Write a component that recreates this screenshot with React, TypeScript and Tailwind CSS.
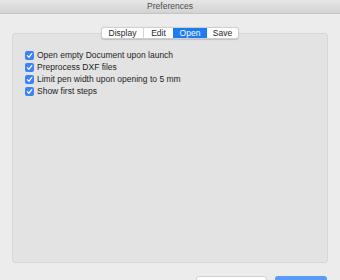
import React from "react";

const Check = () => (
  <span className="w-[9px] h-[9px] rounded-[2px] bg-[#3b82f6] flex items-center justify-center shrink-0">
    <svg width="7" height="7" viewBox="0 0 8 8">
      <path d="M1.5 4.2 L3.3 6 L6.6 1.8" stroke="white" strokeWidth="1.4" fill="none" strokeLinecap="round" strokeLinejoin="round" />
    </svg>
  </span>
);

export default function App() {
  const items = [
    "Open empty Document upon launch",
    "Preprocess DXF files",
    "Limit pen width upon opening to 5 mm",
    "Show first steps",
  ];
  const tabs = ["Display", "Edit", "Open", "Save"];
  return (
    <div
      className="w-[340px] h-[280px] bg-[#ececec] overflow-hidden flex flex-col"
      style={{ fontFamily: '"Liberation Sans", Arial, sans-serif' }}
    >
      <div className="h-[14px] shrink-0 bg-gradient-to-b from-[#e6e6e6] to-[#d3d3d3] border-b border-[#c4c4c4] flex items-center justify-center text-[8.5px] text-[#4d4d4d]">
        Preferences
      </div>
      <div className="relative flex-1 px-[12px] pt-[19px]">
        <div className="h-[230px] bg-[#e3e3e3] border border-[#d6d6d6] rounded-[3px] pt-[17px] pl-[12px] flex flex-col gap-[3px]">
          {items.map((t) => (
            <div key={t} className="flex items-center gap-[3px] h-[9px] text-[8.5px] text-[#1e1e1e]">
              <Check />
              <span>{t}</span>
            </div>
          ))}
        </div>
        <div className="absolute top-[13px] left-[101px] flex h-[12px] bg-white border border-[#cfcfcf] rounded-[3px] text-[8.5px] text-[#262626] shadow-[0_0.5px_1px_rgba(0,0,0,0.15)]">
          {tabs.map((t, i) => (
            <div
              key={t}
              className={
                "flex items-center justify-center " +
                (t === "Open" ? "bg-[#1e7bf2] text-white " : "") +
                (i > 0 && t !== "Open" && tabs[i - 1] !== "Open" ? "border-l border-[#d6d6d6] " : "") +
                (t === "Display" ? "w-[41px]" : t === "Edit" ? "w-[30px]" : t === "Open" ? "w-[34px]" : "w-[31px]")
              }
            >
              {t}
            </div>
          ))}
        </div>
        <div className="flex justify-end gap-[8px] mt-[13px] pr-[1px]">
          <div className="w-[71px] h-[12px] bg-white border border-[#cfcfcf] rounded-[3px]" />
          <div className="w-[52px] h-[12px] bg-[#5a9bf5] rounded-[3px]" />
        </div>
      </div>
    </div>
  );
}
